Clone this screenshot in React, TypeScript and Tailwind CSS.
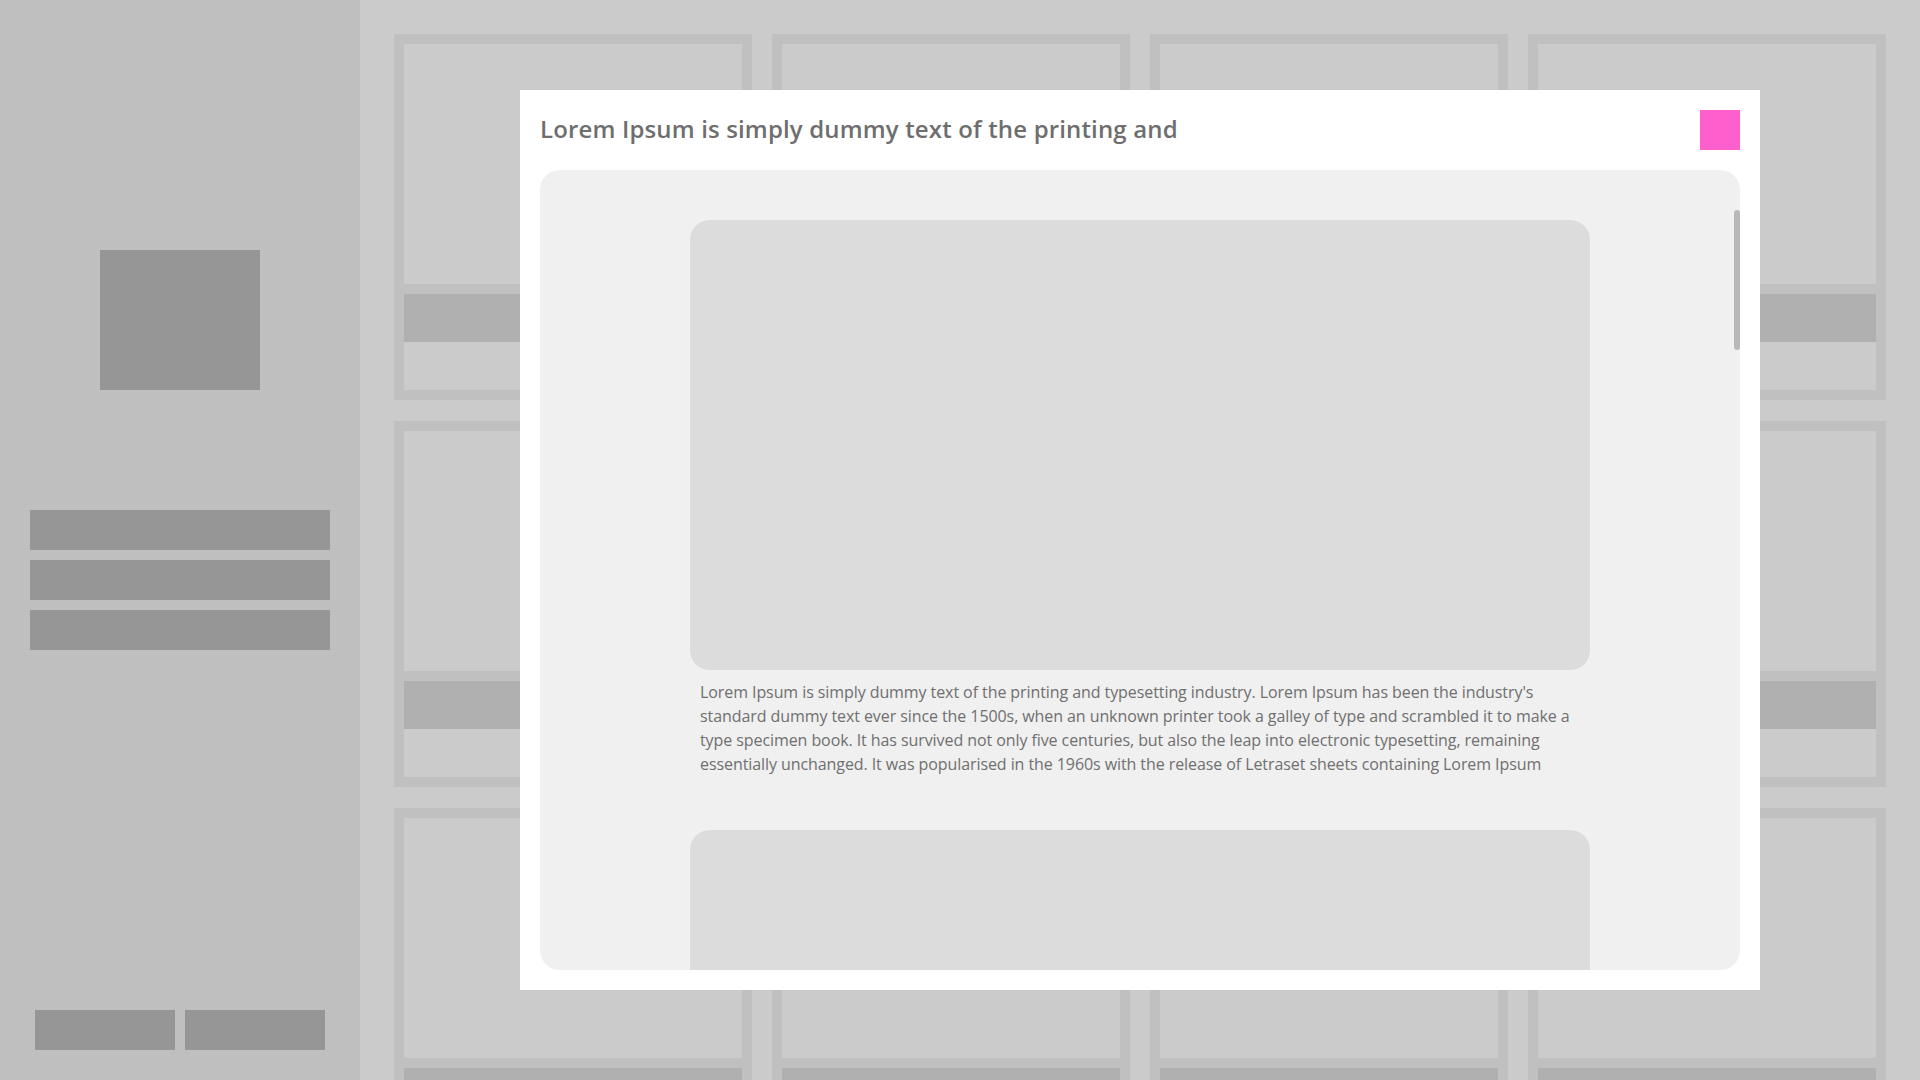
import React from 'react';

const bodyText =
  "Lorem Ipsum is simply dummy text of the printing and typesetting industry. Lorem Ipsum has been the industry's standard dummy text ever since the 1500s, when an unknown printer took a galley of type and scrambled it to make a type specimen book. It has survived not only five centuries, but also the leap into electronic typesetting, remaining essentially unchanged. It was popularised in the 1960s with the release of Letraset sheets containing Lorem Ipsum";

const Card: React.FC = () => {
  return (
    <div className="flex h-[366px] flex-col gap-[10px] border-[10px] border-[#c0c0c0] bg-[#c0c0c0]">
      <div className="h-[240px] bg-[#cbcbcb]" />
      <div className="flex flex-1 flex-col">
        <div className="h-[48px] bg-[#b0b0b0]" />
        <div className="flex-1 bg-[#cbcbcb]" />
      </div>
    </div>
  );
};

const PostItem: React.FC<{ showText?: boolean }> = ({ showText = true }) => {
  return (
    <div className="w-[900px] shrink-0">
      <div className="h-[450px] rounded-[20px] bg-[#dcdcdc]" />
      {showText && (
        <p className="mt-[10px] px-[10px] text-[16px] leading-[24px] tracking-[-0.08px] text-[#6f6f6f]">
          {bodyText}
        </p>
      )}
    </div>
  );
};

export default function App() {
  return (
    <div
      className="flex h-screen w-screen overflow-hidden bg-[#cbcbcb]"
      style={{ fontFamily: '"Open Sans", "Noto Sans", sans-serif' }}
    >
      {/* sidebar */}
      <aside className="flex w-[360px] shrink-0 flex-col items-center bg-[#bfbfbf] pb-[30px]">
        <div className="mt-[250px] h-[140px] w-[160px] bg-[#969696]" />
        <div className="mt-[120px] flex w-[300px] flex-col gap-[10px]">
          <div className="h-[40px] bg-[#969696]" />
          <div className="h-[40px] bg-[#969696]" />
          <div className="h-[40px] bg-[#969696]" />
        </div>
        <div className="mt-auto flex gap-[10px]">
          <div className="h-[40px] w-[140px] bg-[#969696]" />
          <div className="h-[40px] w-[140px] bg-[#969696]" />
        </div>
      </aside>

      {/* main grid */}
      <main className="relative flex-1">
        <div className="grid grid-cols-4 gap-x-[20px] gap-y-[21px] p-[34px]">
          {Array.from({ length: 12 }).map((_, i) => (
            <Card key={i} />
          ))}
        </div>

        {/* modal */}
        <div className="absolute inset-0 flex items-center justify-center">
          <div className="flex h-[900px] w-[1240px] flex-col gap-[20px] bg-white p-[20px]">
            <div className="flex h-[40px] items-center justify-between">
              <h2 className="-mt-[2px] text-[24px] font-semibold tracking-[0.15px] text-[#6e6e6e]">
                Lorem Ipsum is simply dummy text of the printing and
              </h2>
              <button className="h-[40px] w-[40px] bg-[#ff5fcc]" />
            </div>
            <div className="relative flex-1 overflow-hidden rounded-[20px] bg-[#f0f0f0]">
              <div className="flex flex-col items-center gap-[54px] pt-[50px]">
                <PostItem />
                <PostItem showText={false} />
              </div>
              <div className="absolute right-0 top-[40px] h-[140px] w-[6px] rounded-full bg-[#b8b8b8]" />
            </div>
          </div>
        </div>
      </main>
    </div>
  );
}
